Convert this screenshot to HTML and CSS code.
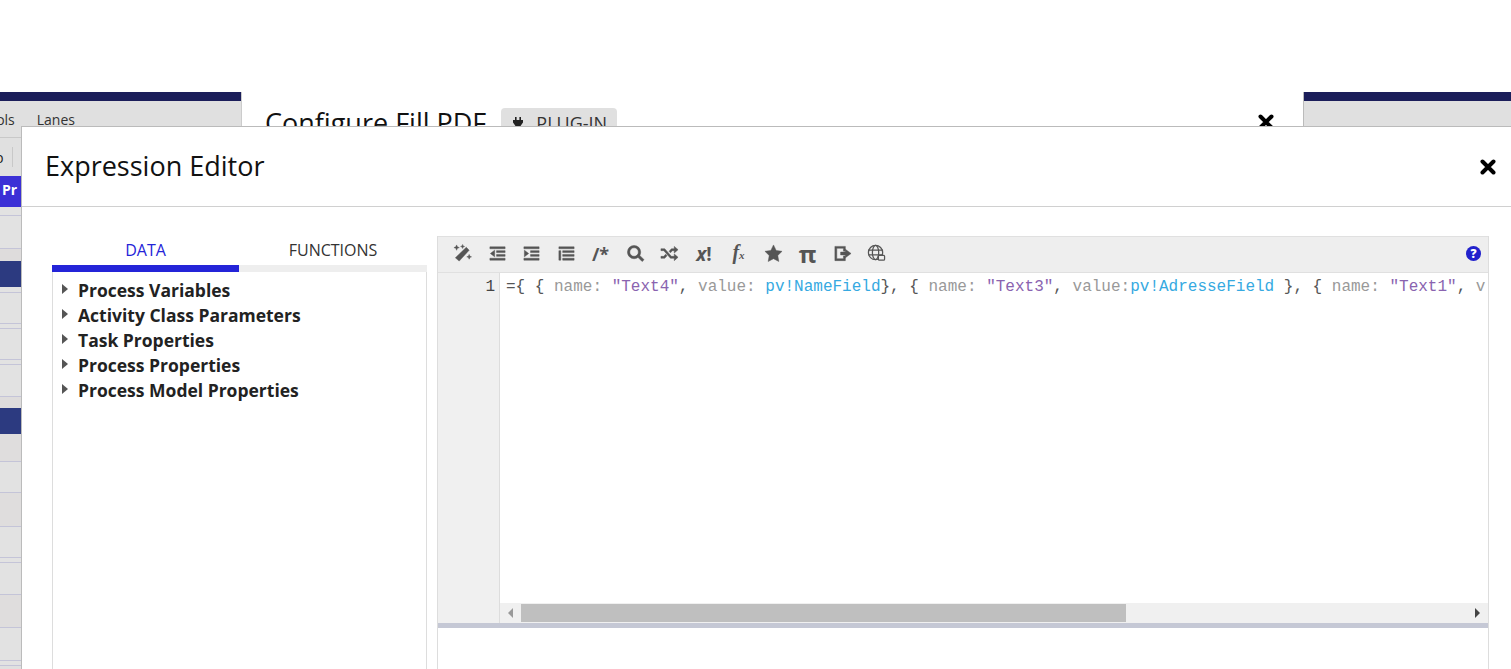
FILE: index.html
```html
<!DOCTYPE html>
<html lang="en">
<head>
    <meta charset="UTF-8">
    <meta name="viewport" content="width=device-width, initial-scale=1.0">
    <title>Expression Editor</title>
    <link rel="stylesheet" href="styles.css">
</head>
<body>
    <div class="backdrop">
        <div class="side-left">
            <div class="navy-bar"></div>
            <div class="menu-bar"><span>Tools</span><span>Lanes</span></div>
            <div class="tool-bar"><span class="tool-letter">p</span><span class="tool-sep"></span></div>
            <div class="palette-head">Pr</div>
            <div class="row h9"></div>
            <div class="row h33"></div>
            <div class="row h12 plain"></div>
            <div class="row h26 dark"></div>
            <div class="row h6"></div>
            <div class="row h31"></div>
            <div class="row h5"></div>
            <div class="row h31"></div>
            <div class="row h5"></div>
            <div class="row h32"></div>
            <div class="row h11 plain"></div>
            <div class="row h26 dark"></div>
            <div class="row h28 warm"></div>
            <div class="row h31"></div>
            <div class="row h34 warm"></div>
            <div class="row h31"></div>
            <div class="row h5"></div>
            <div class="row h32"></div>
            <div class="row h33 warm"></div>
            <div class="row h33"></div>
            <div class="row h5"></div>
        </div>

        <div class="config-dialog">
            <h2 class="config-title">Configure Fill PDF</h2>
            <span class="plugin-badge">
                <svg class="plug-icon" viewBox="0 0 14 14"><path d="M4 1h1.6v3H4zM8.400 1H10v3H8.400zM2 4h10v2.500L9.500 10H8v3H6v-3H4.500L2 6.500z"/></svg>
                PLUG-IN
            </span>
            <svg class="close-icon config-close" viewBox="0 0 16 16"><path d="M2.500 2.500l11 11M13.500 2.500l-11 11"/></svg>
        </div>

        <div class="side-right">
            <div class="navy-bar"></div>
            <div class="menu-bar"></div>
        </div>
    </div>

    <div class="modal">
        <div class="modal-header">
            <h1 class="modal-title">Expression Editor</h1>
            <svg class="close-icon" viewBox="0 0 16 16"><path d="M2.500 2.500l11 11M13.500 2.500l-11 11"/></svg>
        </div>
        <div class="modal-body">
            <div class="data-pane">
                <div class="tabs">
                    <div class="tab active">DATA</div>
                    <div class="tab">FUNCTIONS</div>
                </div>
                <ul class="tree">
                    <li>Process Variables</li>
                    <li>Activity Class Parameters</li>
                    <li>Task Properties</li>
                    <li>Process Properties</li>
                    <li>Process Model Properties</li>
                </ul>
            </div>

            <div class="editor-pane">
                <div class="editor-toolbar">
                    <svg class="tb-icon" viewBox="0 0 20 20"><path d="M14 3.500l3 3L6.500 18 2.500 14.500z"/><path d="M3 3l.8-2 .8 2 2 .8-2 .8-.8 2-.8-2-2-.8zM9.500 2l.6-1.500.6 1.500 1.500.6-1.500.6-.6 1.500-.6-1.500-1.500-.6zM17 11l.7 1.800 1.800.7-1.800.7-.7 1.800-.7-1.800-1.800-.7 1.800-.7z"/></svg>
                    <svg class="tb-icon" viewBox="0 0 20 20"><path d="M2 3h16v2H2zM9 7h9v2H9zM9 11h9v2H9zM2 15h16v2H2zM7 6.500v7L2.500 10z"/></svg>
                    <svg class="tb-icon" viewBox="0 0 20 20"><path d="M2 3h16v2H2zM9 7h9v2H9zM9 11h9v2H9zM2 15h16v2H2zM2.500 6.500v7L7 10z"/></svg>
                    <svg class="tb-icon" viewBox="0 0 20 20"><path d="M2 3h16v2H2zM6 7h12v2H6zM6 11h12v2H6zM6 15h12v2H6zM2 7h2v10H2z"/></svg>
                    <span class="tb-text">/*</span>
                    <svg class="tb-icon" viewBox="0 0 20 20"><path d="M8.500 1.500a7 7 0 1 1 0 14 7 7 0 0 1 0-14zm0 2.500a4.500 4.500 0 1 0 0 9 4.500 4.500 0 0 0 0-9z"/><path d="M12.500 14l2-2 4.500 4.500-2 2z"/></svg>
                    <svg class="tb-icon" viewBox="0 0 20 20"><path d="M1 5h4l7 8h3v-2.500l4 3.500-4 3.500V15h-4L4 7H1zM1 13h3l2-2.300 1.400 1.700L5 15H1zM12 5h3V2.500L19 6l-4 3.500V7h-2l-2 2.300-1.400-1.700z"/></svg>
                    <span class="tb-text tb-bang"><i>x</i>!</span>
                    <span class="tb-text tb-fx">f<small>x</small></span>
                    <svg class="tb-icon" viewBox="0 0 20 20"><path d="M10 1l2.800 5.800 6.200.9-4.500 4.400 1.100 6.300L10 15.400l-5.600 3 1.100-6.300L1 7.700l6.200-.9z"/></svg>
                    <span class="tb-text tb-pi">&#960;</span>
                    <svg class="tb-icon" viewBox="0 0 20 20"><path d="M2 2.500h11v5h-2v-3H4v11h7v-3h2v5H2z"/><path d="M8 8.500h5V5.500l6 4.500-6 4.500v-3H8z"/></svg>
                    <svg class="tb-icon tb-globe" viewBox="0 0 20 20"><circle cx="9" cy="9" r="7.500"/><ellipse cx="9" cy="9" rx="3.300" ry="7.500"/><path d="M1.500 6.500h15M1.500 11.500h15"/><rect x="12" y="12" width="6.500" height="5" rx="1" class="globe-tag"/></svg>
                    <span class="help-icon">?</span>
                </div>
                <div class="code-area">
                    <div class="gutter">1</div>
                    <div class="code-col">
                        <pre class="code-line">={ { <span class="key">name:</span> <span class="str">"Text4"</span>, <span class="key">value:</span> <span class="pv">pv!NameField</span>}, { <span class="key">name:</span> <span class="str">"Text3"</span>, <span class="key">value:</span><span class="pv">pv!AdresseField</span> }, { <span class="key">name:</span> <span class="str">"Text1"</span>, <span class="key">v</span></pre>
                        <div class="hscroll">
                            <span class="arrow-left"></span>
                            <div class="track"><div class="thumb"></div></div>
                            <span class="arrow-right"></span>
                        </div>
                    </div>
                </div>
                <div class="resize-bar"></div>
            </div>
        </div>
    </div>
</body>
</html>
```

FILE: styles.css
```css
body {
    margin: 0;
    height: 669px;
    overflow: hidden;
    background-color: white;
    font-family: "Open Sans", sans-serif;
    color: #222;
}
.backdrop {
    display: flex;
    height: 577px;
    padding-top: 92px;
}
.side-left {
    width: 241px;
    flex-shrink: 0;
    background-color: #e0e0e0;
    overflow: hidden;
}
.side-right {
    flex: 1;
    background-color: #e0e0e0;
    border-left: 1px solid #bbb;
}
.navy-bar {
    height: 9px;
    background-color: #1b1e5a;
}
.menu-bar {
    display: flex;
    gap: 22px;
    height: 37px;
    padding-top: 9px;
    box-sizing: border-box;
    margin-left: -20px;
    font-size: 14px;
    line-height: 20px;
    color: #333;
    border-bottom: 1px solid #c8c8c8;
}
.side-right .menu-bar {
    margin-left: 0;
}
.tool-bar {
    display: flex;
    align-items: center;
    gap: 8px;
    height: 38px;
    margin-left: -5px;
    font-size: 14px;
}
.tool-sep {
    width: 1px;
    height: 20px;
    background-color: #c8c8c8;
}
.palette-head {
    height: 31px;
    padding-left: 2px;
    box-sizing: border-box;
    background-color: #3b30d6;
    color: white;
    font-size: 14px;
    font-weight: 700;
    line-height: 28px;
}
.row {
    box-sizing: border-box;
    border-bottom: 1px solid #c4c4d8;
    background-color: #e2e2e2;
}
.row.plain {
    border-bottom: none;
    background-color: #dedcdc;
}
.row.warm {
    background-color: #dfdddd;
}
.row.dark {
    border-bottom: none;
    background-color: #2c3a80;
}
.h5 { height: 5px; }
.h6 { height: 6px; }
.h9 { height: 9px; }
.h11 { height: 11px; }
.h12 { height: 12px; }
.h26 { height: 26px; }
.h28 { height: 28px; }
.h31 { height: 31px; }
.h32 { height: 32px; }
.h33 { height: 33px; }
.h34 { height: 34px; }

.config-dialog {
    width: 1062px;
    box-sizing: border-box;
    flex-shrink: 0;
    display: flex;
    align-items: flex-start;
    gap: 15px;
    padding: 16px 29px 0 23px;
    border-left: 1px solid #ccc;
}
.config-title {
    margin: 0;
    font-size: 27px;
    font-weight: 500;
    line-height: 30px;
    color: #111;
}
.plugin-badge {
    display: flex;
    align-items: center;
    gap: 11px;
    height: 30px;
    padding: 0 10px;
    background-color: #e0e0e0;
    border-radius: 4px;
    font-size: 18px;
    color: #333;
}
.plug-icon {
    width: 14px;
    height: 14px;
    fill: #222;
}
.close-icon {
    width: 16px;
    height: 16px;
    fill: none;
    stroke: #000;
    stroke-width: 4;
    stroke-linecap: round;
}
.config-close {
    margin: 6px 0 0 auto;
}

.modal {
    position: absolute;
    left: 21px;
    top: 126px;
    right: 0;
    bottom: 0;
    background-color: white;
    border-top: 1px solid #bbb;
    border-left: 1px solid #bbb;
    display: flex;
    flex-direction: column;
}
.modal-header {
    display: flex;
    align-items: center;
    justify-content: space-between;
    height: 79px;
    flex-shrink: 0;
    padding: 0 15px 0 23px;
    border-bottom: 1px solid #d0d0d0;
}
.modal-title {
    margin: -2px 0 0 0;
    font-size: 27px;
    font-weight: 500;
    color: #111;
}
.modal-body {
    flex: 1;
    display: flex;
    min-height: 0;
    padding: 29px 22px 0 30px;
    gap: 10px;
}
.data-pane {
    width: 375px;
    flex-shrink: 0;
    display: flex;
    flex-direction: column;
}
.tabs {
    display: flex;
    flex-shrink: 0;
}
.tab {
    flex: 1;
    height: 36px;
    box-sizing: border-box;
    text-align: center;
    font-size: 16px;
    line-height: 28px;
    border-bottom: 7px solid #eee;
    color: #333;
}
.tab.active {
    flex: 0 0 187px;
    color: #2424d8;
    border-bottom-color: #2424d8;
}
.tree {
    flex: 1;
    list-style: none;
    margin: 0 0 -2px 0;
    padding: 5px 0 0 0;
    border: 1px solid #ddd;
    border-top: none;
}
.tree li {
    display: flex;
    align-items: center;
    height: 25px;
    padding-left: 9px;
    font-size: 17.500px;
    font-weight: 700;
    color: #222;
}
.tree li::before {
    content: "";
    border-left: 6px solid #555;
    border-top: 5px solid transparent;
    border-bottom: 5px solid transparent;
    margin-right: 10px;
    margin-top: -2px;
}

.editor-pane {
    flex: 1;
    min-width: 0;
    display: flex;
    flex-direction: column;
    border-left: 1px solid #ddd;
    border-right: 1px solid #ddd;
}
.editor-toolbar {
    display: flex;
    align-items: center;
    flex-shrink: 0;
    gap: 15.500px;
    height: 36px;
    padding: 0 7px 2px 15px;
    box-sizing: border-box;
    background-color: #eee;
    border-top: 1px solid #e0e0e0;
}
.tb-icon {
    width: 19px;
    height: 19px;
    fill: #555;
    stroke: #555;
    stroke-width: 0.500;
}
.tb-globe {
    fill: none;
    stroke-width: 1.300;
}
.globe-tag {
    fill: #eee;
}
.tb-text {
    min-width: 19px;
    font-size: 18px;
    font-weight: 700;
    line-height: 20px;
    color: #555;
    text-align: center;
}
.tb-bang {
    font-size: 19px;
}
.tb-fx {
    font-family: "Liberation Serif", serif;
    font-style: italic;
    font-size: 20px;
}
.tb-fx small {
    font-size: 11px;
}
.tb-pi {
    font-size: 24px;
}
.help-icon {
    width: 15px;
    height: 15px;
    margin-left: auto;
    border-radius: 50%;
    background-color: #2222cc;
    color: white;
    font-size: 12px;
    font-weight: 800;
    line-height: 15px;
    text-align: center;
}
.code-area {
    flex: 1;
    display: flex;
    min-height: 0;
    border-top: 1px solid #e0e0e0;
}
.gutter {
    width: 62px;
    flex-shrink: 0;
    box-sizing: border-box;
    padding: 3px 4px 0 0;
    background-color: #f0f0f0;
    border-right: 1px solid #ddd;
    text-align: right;
    font-family: "Liberation Mono", monospace;
    font-size: 16px;
    line-height: 22px;
    color: #444;
}
.code-col {
    flex: 1;
    min-width: 0;
    display: flex;
    flex-direction: column;
}
.code-line {
    flex: 1;
    margin: 0;
    padding: 3px 0 0 6px;
    font-family: "Liberation Mono", monospace;
    font-size: 16px;
    line-height: 22px;
    color: #555;
}
.key { color: #999; }
.str { color: #8a63b0; }
.pv { color: #36a9e1; }
.hscroll {
    display: flex;
    align-items: center;
    flex-shrink: 0;
    height: 20px;
    background-color: #f0f0f0;
}
.arrow-left, .arrow-right {
    width: 21px;
    display: flex;
    justify-content: center;
}
.arrow-left::before {
    content: "";
    border-right: 5px solid #999;
    border-top: 5px solid transparent;
    border-bottom: 5px solid transparent;
}
.arrow-right::before {
    content: "";
    border-left: 5px solid #444;
    border-top: 5px solid transparent;
    border-bottom: 5px solid transparent;
}
.track {
    flex: 1;
    height: 18px;
}
.thumb {
    width: 64%;
    height: 100%;
    background-color: #bfbfbf;
}
.resize-bar {
    height: 5px;
    flex-shrink: 0;
    background-color: #c5c8d5;
    margin-bottom: 41px;
}
```
